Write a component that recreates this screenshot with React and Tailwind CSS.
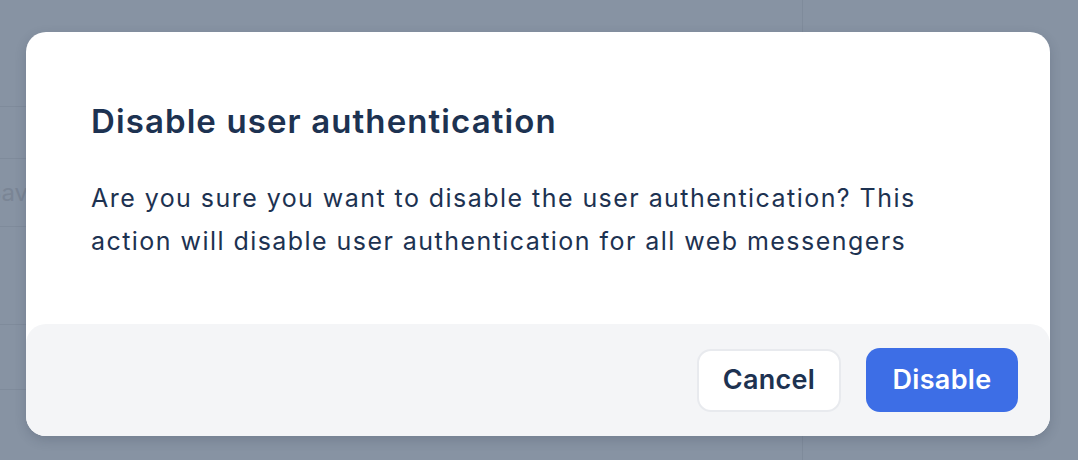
import React from "react";

export default function App() {
  return (
    <div className="relative w-[1078px] h-[460px] overflow-hidden bg-[#8793a3]" style={{ fontFamily: "Inter, 'Noto Sans', sans-serif" }}>
      {/* background page (dimmed) */}
      <div className="flex h-full">
        <div className="w-[803px] border-r border-[#7f8b9b] flex flex-col">
          <div className="h-[107px] border-b border-[#7f8b9b]" />
          <div className="h-[51px]" />
          <div className="h-[69px] border-y border-[#7f8b9b] flex items-center">
            <span className="text-[24px] text-[#7a8595] -ml-[14px]">Save</span>
          </div>
          <div className="h-[98px] border-b border-[#7f8b9b]" />
          <div className="h-[65px] border-b border-[#7f8b9b]" />
        </div>
        <div className="flex-1" />
      </div>

      {/* modal */}
      <div className="absolute left-[26px] top-[32px] w-[1024px] h-[404px] rounded-[20px] bg-white shadow-[0_4px_12px_rgba(30,41,59,0.18)] flex flex-col">
        <div className="flex-1 px-[65px] pt-[65px]">
          <h2 className="text-[33px] leading-[48px] font-semibold text-[#1d3251] tracking-[1.1px]">
            Disable user authentication
          </h2>
          <p className="mt-[32px] text-[25px] leading-[43px] text-[#1d3251] tracking-[1.45px] w-[870px]">
            Are you sure you want to disable the user authentication? This action will disable user authentication for all web messengers
          </p>
        </div>
        <div className="h-[112px] rounded-[20px] bg-[#f4f5f7] flex items-center justify-end gap-[25px] pr-[32px]">
          <button className="w-[144px] h-[63px] rounded-[14px] border-2 border-[#e8eaee] bg-white text-[27px] font-semibold text-[#1d3251] tracking-[0.3px]">
            Cancel
          </button>
          <button className="w-[152px] h-[64px] rounded-[14px] bg-[#3d6ee6] text-[27px] font-semibold text-white tracking-[0.3px]">
            Disable
          </button>
        </div>
      </div>
    </div>
  );
}
